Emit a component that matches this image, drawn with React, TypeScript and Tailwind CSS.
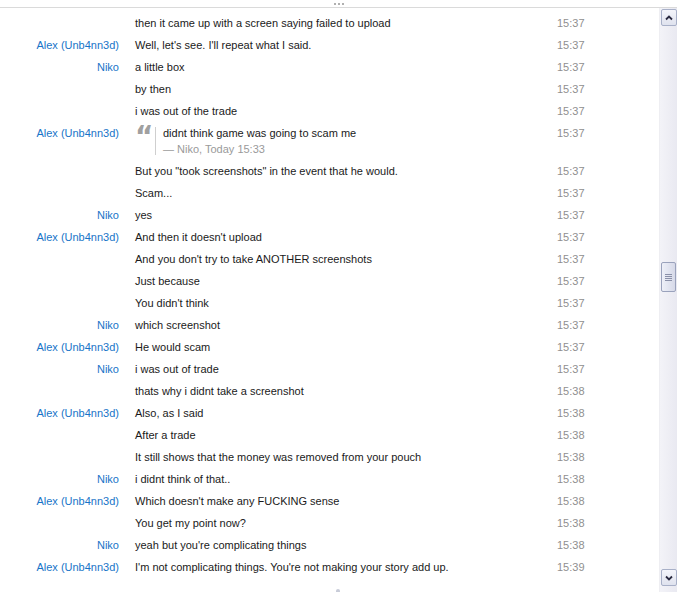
import React from "react";

type Msg = {
  name?: string;
  text?: string;
  time: string;
  quote?: { text: string; by: string };
};

const MESSAGES: Msg[] = [
  { text: "then it came up with a screen saying failed to upload", time: "15:37" },
  { name: "Alex (Unb4nn3d)", text: "Well, let's see. I'll repeat what I said.", time: "15:37" },
  { name: "Niko", text: "a little box", time: "15:37" },
  { text: "by then", time: "15:37" },
  { text: "i was out of the trade", time: "15:37" },
  {
    name: "Alex (Unb4nn3d)",
    time: "15:37",
    quote: { text: "didnt think game was going to scam me", by: "— Niko, Today 15:33" },
  },
  { text: 'But you "took screenshots" in the event that he would.', time: "15:37" },
  { text: "Scam...", time: "15:37" },
  { name: "Niko", text: "yes", time: "15:37" },
  { name: "Alex (Unb4nn3d)", text: "And then it doesn't upload", time: "15:37" },
  { text: "And you don't try to take ANOTHER screenshots", time: "15:37" },
  { text: "Just because", time: "15:37" },
  { text: "You didn't think", time: "15:37" },
  { name: "Niko", text: "which screenshot", time: "15:37" },
  { name: "Alex (Unb4nn3d)", text: "He would scam", time: "15:37" },
  { name: "Niko", text: "i was out of trade", time: "15:37" },
  { text: "thats why i didnt take a screenshot", time: "15:38" },
  { name: "Alex (Unb4nn3d)", text: "Also, as I said", time: "15:38" },
  { text: "After a trade", time: "15:38" },
  { text: "It still shows that the money was removed from your pouch", time: "15:38" },
  { name: "Niko", text: "i didnt think of that..", time: "15:38" },
  { name: "Alex (Unb4nn3d)", text: "Which doesn't make any FUCKING sense", time: "15:38" },
  { text: "You get my point now?", time: "15:38" },
  { name: "Niko", text: "yeah but you're complicating things", time: "15:38" },
  { name: "Alex (Unb4nn3d)", text: "I'm not complicating things. You're not making your story add up.", time: "15:39" },
];

function Row({ m }: { m: Msg }) {
  return (
    <div className="flex items-start py-[5px] leading-[12px]">
      <div className="w-[119px] shrink-0 text-right text-[#1874c8]">{m.name}</div>
      <div className="ml-[16px] w-[422px] shrink-0 text-[#1a1a1a]">
        {m.quote ? (
          <div className="flex">
            <span
              className="-mt-[3px] w-[20px] text-[28px] leading-[26px] font-bold text-[#a0a0a0]"
              style={{ fontFamily: "'DejaVu Sans', sans-serif" }}
            >
              “
            </span>
            <div className="border-l border-[#cfcfcf] pl-[7px]">
              <div>{m.quote.text}</div>
              <div className="mt-[4px] text-[#9a9a9a]">{m.quote.by}</div>
            </div>
          </div>
        ) : (
          m.text
        )}
      </div>
      <div className="text-[#8f8f8f]">{m.time}</div>
    </div>
  );
}

function ScrollBtn({ down }: { down?: boolean }) {
  return (
    <div className="mx-[1px] flex h-[17px] w-[16px] items-center justify-center rounded-[2px] border border-[#a8b0c8] bg-gradient-to-b from-[#f4f5fb] to-[#dfe2ee]">
      <svg width="8" height="6" viewBox="0 0 8 6">
        <path
          d={down ? "M1 1.5 L4 4.5 L7 1.5" : "M1 4.5 L4 1.5 L7 4.5"}
          fill="none"
          stroke="#2a2a40"
          strokeWidth="1.8"
        />
      </svg>
    </div>
  );
}

export default function App() {
  return (
    <div
      className="relative h-[592px] w-[677px] overflow-hidden bg-white text-[11px]"
      style={{ fontFamily: "Tahoma, 'Liberation Sans', sans-serif" }}
    >
      <div className="flex h-[8px] items-start justify-center border-b border-[#dadada]">
        <div className="mt-[3px] flex gap-[2px]">
          <span className="h-[2px] w-[2px] bg-[#b0b0b0]" />
          <span className="h-[2px] w-[2px] bg-[#b0b0b0]" />
          <span className="h-[2px] w-[2px] bg-[#b0b0b0]" />
        </div>
      </div>
      <div className="flex h-[584px]">
        <div className="flex-1 overflow-hidden pt-[4px]">
          {MESSAGES.map((m, i) => (
            <Row key={i} m={m} />
          ))}
        </div>
        <div className="flex w-[18px] flex-col border-l border-[#eeeef2] bg-gradient-to-r from-[#f3f3f8] to-[#e9e9f1] pt-[1px] pb-[6px]">
          <ScrollBtn />
          <div className="flex flex-1 flex-col">
            <div className="h-[236px]" />
            <div className="mx-[1px] flex h-[30px] items-center justify-center rounded-[2px] border border-[#9aa2bc] bg-gradient-to-r from-[#eef0f8] to-[#d6d9e8]">
              <div className="flex flex-col gap-[1px]">
                <span className="h-[1px] w-[7px] bg-[#8a90a8]" />
                <span className="h-[1px] w-[7px] bg-[#8a90a8]" />
                <span className="h-[1px] w-[7px] bg-[#8a90a8]" />
                <span className="h-[1px] w-[7px] bg-[#8a90a8]" />
              </div>
            </div>
          </div>
          <ScrollBtn down />
        </div>
      </div>
      <div className="absolute bottom-0 left-[336px] h-[3px] w-[4px] rounded-t-full bg-[#c8ccd8]" />
    </div>
  );
}
